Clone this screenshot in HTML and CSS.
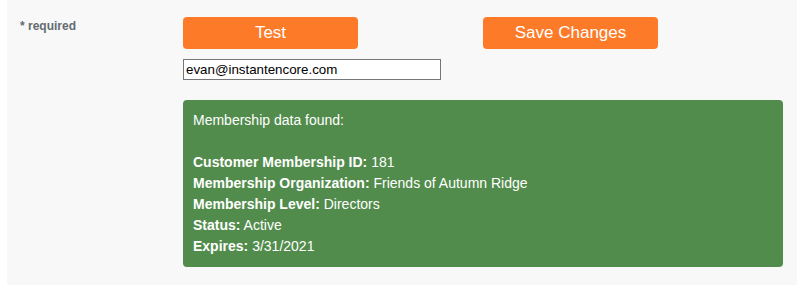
FILE: index.html
```html
<!DOCTYPE html>
<html>
<head>
<meta charset="utf-8">
<link rel="stylesheet" href="styles.css">
</head>
<body>
<div class="panel">
  <div class="label-col"><span class="required">* required</span></div>
  <div class="main-col">
    <div class="buttons">
      <button class="btn">Test</button>
      <button class="btn">Save Changes</button>
    </div>
    <input class="email" type="text" value="evan@instantencore.com">
    <div class="result">
      Membership data found:<br><br>
      <b>Customer Membership ID:</b> 181<br>
      <b>Membership Organization:</b> Friends of Autumn Ridge<br>
      <b>Membership Level:</b> Directors<br>
      <b>Status:</b> Active<br>
      <b>Expires:</b> 3/31/2021
    </div>
  </div>
</div>
</body>
</html>
```
FILE: styles.css
```css
html, body {
  margin: 0;
  padding: 0;
  background: #ffffff;
  font-family: Arial, "Liberation Sans", sans-serif;
}
.panel {
  margin-left: 7px;
  height: 285px;
  background: #f8f8f8;
  display: grid;
  grid-template-columns: 176px 600px;
}
.label-col {
  padding: 16px 0 0 13px;
}
.required {
  font-size: 12px;
  font-weight: bold;
  color: #636b72;
}
.main-col {
  padding-top: 17px;
  display: flex;
  flex-direction: column;
  align-items: flex-start;
}
.buttons {
  display: flex;
  gap: 125px;
}
.btn {
  width: 175px;
  height: 32px;
  border: none;
  border-radius: 4px;
  background: #fd7b28;
  color: #ffffff;
  font-family: Arial, "Liberation Sans", sans-serif;
  font-size: 17px;
  padding: 0;
}
.email {
  margin-top: 10px;
  width: 258px;
  height: 21px;
  box-sizing: border-box;
  border: 1px solid #767676;
  padding: 1px 2px;
  font-family: Arial, "Liberation Sans", sans-serif;
  font-size: 13.33px;
  color: #000;
  background: #fff;
}
.result {
  margin-top: 20px;
  width: 600px;
  box-sizing: border-box;
  padding: 10px 10px;
  background: #528c4c;
  border-radius: 4px;
  color: #ffffff;
  font-size: 14px;
  line-height: 21px;
}
```
